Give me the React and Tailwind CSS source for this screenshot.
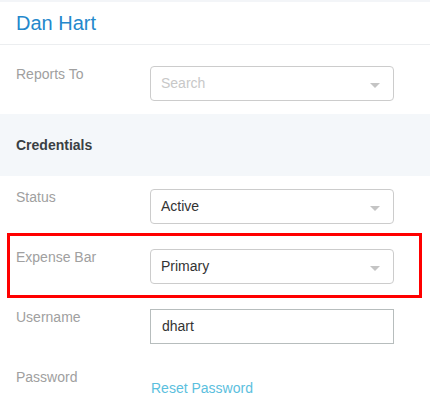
import React from "react";

function Arrow() {
  return (
    <svg width="10" height="5" viewBox="0 0 10 5" className="absolute right-[13px] top-[16px]">
      <path d="M0 0 H10 L5 5 Z" fill="#c4c4c4" />
    </svg>
  );
}

function Select({ value, placeholder }) {
  return (
    <div className="relative w-[244px] h-[35px] rounded-[4px] border border-[#cccccc] bg-white flex items-center pl-[10px]">
      {value ? (
        <span className="text-[14px] text-[#333333]">{value}</span>
      ) : (
        <span className="text-[14px] text-[#c8c8c8]">{placeholder}</span>
      )}
      <Arrow />
    </div>
  );
}

function Row({ label, children, highlight, first }) {
  return (
    <div className={first ? "relative flex h-[69px] pt-[21px]" : "relative flex h-[60px] pt-[13px]"}>
      <div className="w-[150px] shrink-0 pl-[16px] text-[14px] leading-[16px] text-[#a0a0a0]">{label}</div>
      <div>{children}</div>
      {highlight && (
        <div className="absolute left-[7px] right-[8px] top-[-3px] h-[65px] border-[3px] border-[#ff0000] pointer-events-none" />
      )}
    </div>
  );
}

export default function App() {
  return (
    <div className="w-[430px] h-[409px] overflow-hidden bg-white" style={{ fontFamily: '"Liberation Sans", Arial, sans-serif' }}>
      <div className="h-[2px] bg-[#f3f5f8]" />
      <div className="h-[43px] flex items-center pl-[16px] border-b border-[#eceef0]">
        <span className="text-[20px] text-[#2488cc] leading-none">Dan Hart</span>
      </div>
      <Row label="Reports To" first>
        <Select placeholder="Search" />
      </Row>
      <div className="h-[62px] bg-[#f4f7fa] flex items-center pl-[16px]">
        <span className="text-[14px] font-bold text-[#3a3f44]">Credentials</span>
      </div>
      <Row label="Status">
        <Select value="Active" />
      </Row>
      <Row label="Expense Bar" highlight>
        <Select value="Primary" />
      </Row>
      <Row label="Username">
        <div className="w-[244px] h-[35px] border border-[#b7bdbd] bg-white flex items-center pl-[11px]">
          <span className="text-[14px] text-[#333333]">dhart</span>
        </div>
      </Row>
      <Row label="Password">
        <div className="h-[35px] flex items-center pl-[1px] pt-[3px]">
          <span className="text-[14px] text-[#5bc0de]">Reset Password</span>
        </div>
      </Row>
    </div>
  );
}
